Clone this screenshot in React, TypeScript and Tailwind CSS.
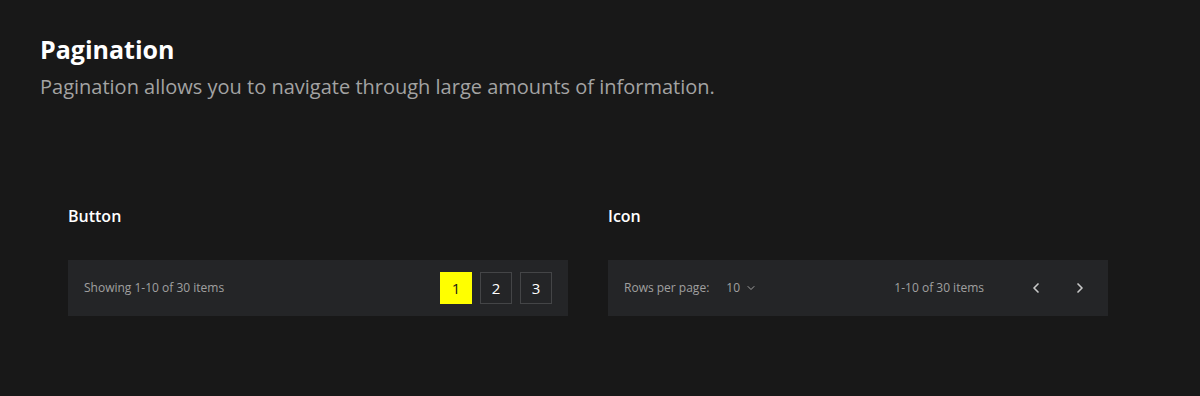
import { ChevronDown, ChevronLeft, ChevronRight } from "lucide-react";

const pages = [1, 2, 3];

export default function App() {
  return (
    <div
      className="min-h-[396px] w-full bg-[#181818] text-white"
      style={{ fontFamily: '"Open Sans", "Noto Sans", sans-serif' }}
    >
      <div className="px-10 pt-[33px]">
        <h1 className="text-[25px] font-bold leading-[32px]">Pagination</h1>
        <p className="mt-[8px] text-[20px] leading-[28px] text-[#a3a3a3]">
          Pagination allows you to navigate through large amounts of information.
        </p>
      </div>

      <div className="mt-[103px] flex gap-10 px-[68px]">
        <section className="w-[500px]">
          <h2 className="text-[16px] font-semibold leading-[24px]">Button</h2>
          <div className="mt-[32px] flex h-14 items-center justify-between bg-[#242527] pl-4 pr-4">
            <span className="text-[12px] text-[#a0a0a0]">Showing 1-10 of 30 items</span>
            <div className="flex gap-2">
              {pages.map((p) => (
                <button
                  key={p}
                  className={
                    p === 1
                      ? "flex h-8 w-8 items-center justify-center bg-[#ffff00] text-[15px] text-[#181818]"
                      : "flex h-8 w-8 items-center justify-center border border-[#444547] text-[15px] text-white"
                  }
                >
                  {p}
                </button>
              ))}
            </div>
          </div>
        </section>

        <section className="w-[500px]">
          <h2 className="text-[16px] font-semibold leading-[24px]">Icon</h2>
          <div className="mt-[32px] flex h-14 items-center bg-[#242527] pl-4 pr-4">
            <span className="text-[12px] text-[#a0a0a0]">Rows per page:</span>
            <span className="ml-[17px] flex items-center gap-[5px] text-[12px] text-[#a0a0a0]">
              10 <ChevronDown size={12} strokeWidth={2} />
            </span>
            <span className="ml-auto text-[12px] text-[#a0a0a0]">1-10 of 30 items</span>
            <div className="ml-[44px] flex items-center gap-[28px] text-[#c8c8c8]">
              <ChevronLeft size={16} strokeWidth={2.5} />
              <ChevronRight size={16} strokeWidth={2.5} />
            </div>
            <div className="w-[4px]" />
          </div>
        </section>
      </div>
    </div>
  );
}
